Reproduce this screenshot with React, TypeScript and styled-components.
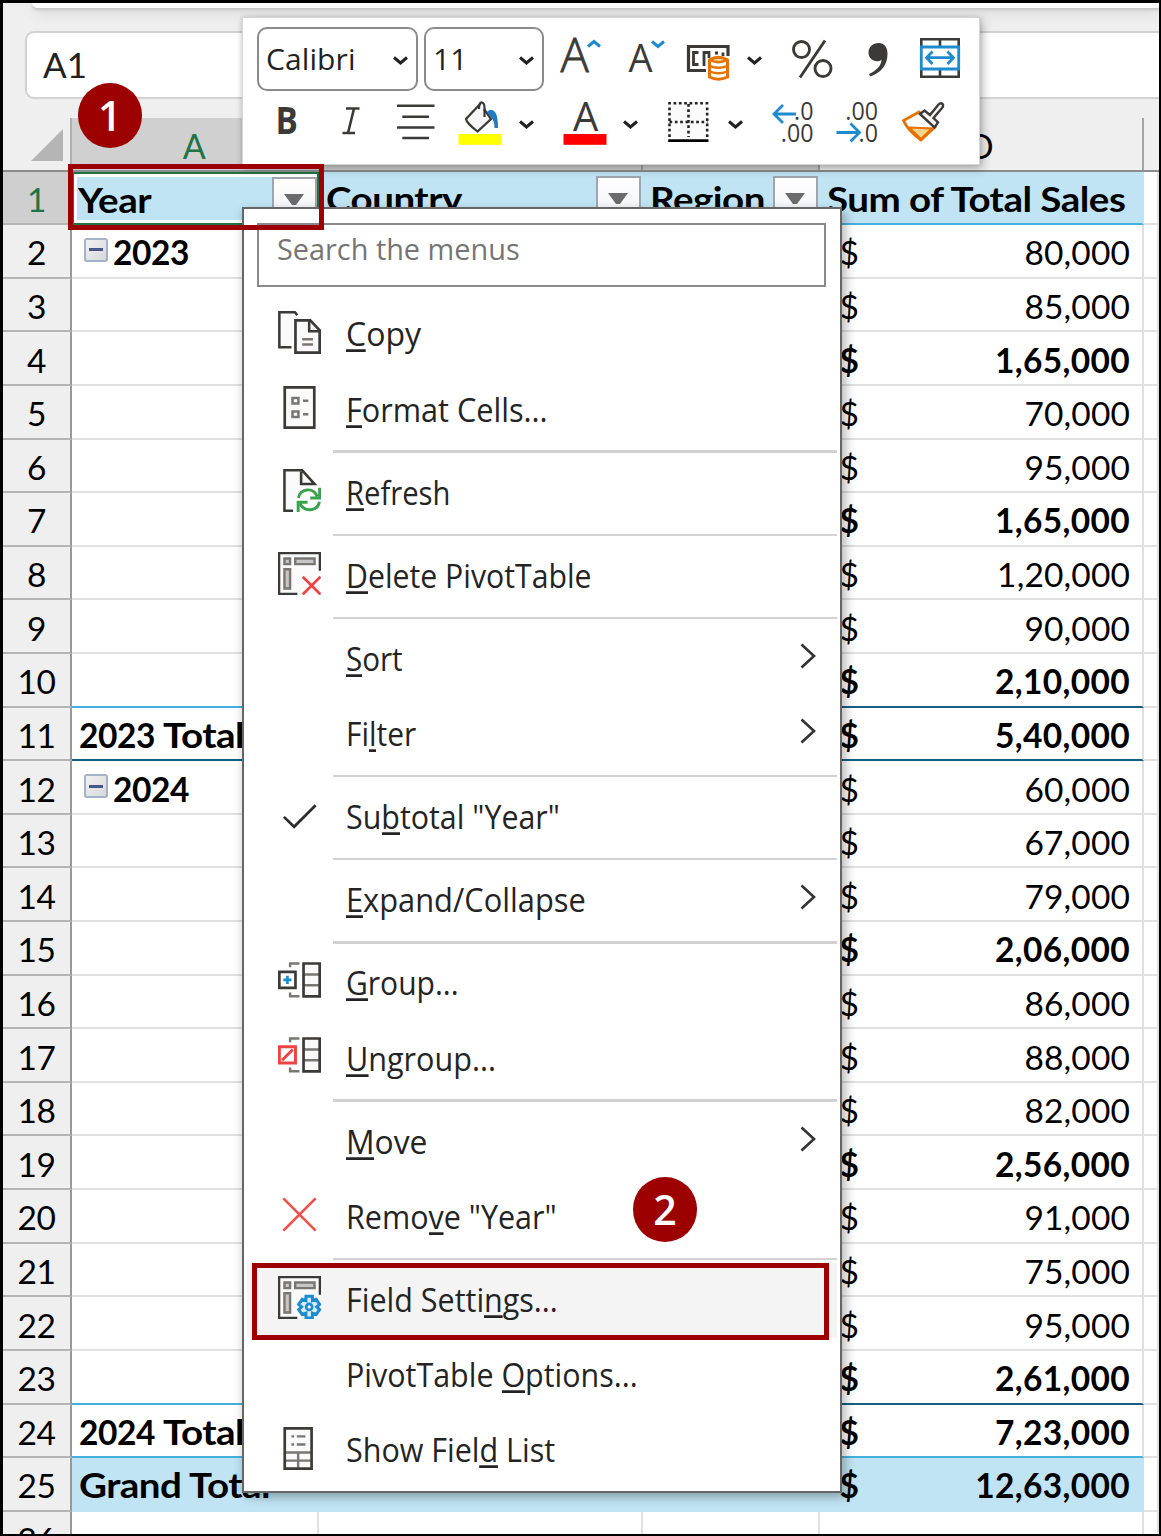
import React from "react";
import styled, { createGlobalStyle, css } from "styled-components";

const GlobalStyle = createGlobalStyle`
  *, *::before, *::after { box-sizing: border-box; }
  body { margin: 0; background: #000; }
`;

const sheetFont = `Lato, "Open Sans", sans-serif`;
const uiFont = `"Open Sans", "Noto Sans", sans-serif`;
const ROW = 53.62;
const red = "#9c0000";

const Window = styled.div`
  position: relative;
  width: 1161px;
  height: 1536px;
  padding: 3px 2px 3px 3px;
  background: #000;
  overflow: hidden;
`;

const Workbook = styled.div`
  display: flex;
  flex-direction: column;
  width: 100%;
  height: 1530.5px;
  overflow: hidden;
  background: #fff;
  font-family: ${sheetFont};
`;

/* ---------- ribbon edge and name box ---------- */

const RibbonEdge = styled.div`
  flex: none;
  height: 28px;
  padding-left: 29px;
  background: #efefef;
`;

const RibbonPanel = styled.div`
  height: 5px;
  background: #fff;
  border-bottom-left-radius: 8px;
  box-shadow: 0 2px 3px #c4c4c4, 0 4px 14px rgba(0, 0, 0, 0.16);
`;

const FormulaBar = styled.div`
  flex: none;
  display: flex;
  height: 68px;
  padding-left: 22px;
  background: #efefef;
`;

const NameBox = styled.div`
  flex: 1;
  display: flex;
  align-items: center;
  padding: 0 0 2px 16px;
  border: 2px solid #d2d2d2;
  border-right: 0;
  border-radius: 9px 0 0 9px;
  background: #fff;
  color: #222;
  font-size: 35px;
`;

/* ---------- grid ---------- */

const gridColumns = css`
  display: grid;
  grid-template-columns: 69px 246.5px 324px 177px 324.6px 1fr;
`;

const ColumnHeads = styled.div`
  ${gridColumns}
  flex: none;
  height: 72.5px;
  padding-top: 19px;
  background: #efefef;
  border-bottom: 2.6px solid #8c8c8c;
`;

const ColumnHead = styled.div<{ $active?: boolean; $shaded?: boolean }>`
  display: flex;
  align-items: center;
  justify-content: center;
  padding-top: 4px;
  border-right: 2px solid ${(p) => (p.$active ? "#cfcfcf" : "#a5a5a5")};
  background: ${(p) => (p.$active || p.$shaded ? "#d0d0d0" : "#efefef")};
  color: ${(p) => (p.$active ? "#217346" : "#000")};
  font-size: 34px;
  &:last-child { border-right: 0; }
`;

const Corner = styled.div`
  display: flex;
  justify-content: flex-end;
  align-items: flex-end;
  padding: 0 7px 9px 0;
  border-right: 2px solid #b0b0b0;
`;

const SheetRow = styled.div`
  ${gridColumns}
  flex: none;
  height: ${ROW}px;
`;

const RowHead = styled.div<{ $active?: boolean }>`
  display: flex;
  align-items: center;
  justify-content: center;
  padding: 3px 0 0 0;
  border-right: 2.4px solid #999;
  border-bottom: 2px solid #b4b4b4;
  background: ${(p) => (p.$active ? "#cfcfcf" : "#efefef")};
  color: ${(p) => (p.$active ? "#217346" : "#000")};
  font-size: 33.5px;
  letter-spacing: -0.4px;
`;

type Line = "grid" | "light" | "dark" | "none";
const lineColor: Record<Line, string> = {
  grid: "#e0e0e0",
  light: "#45b0e0",
  dark: "#156082",
  none: "#c0e4f4",
};

const Cell = styled.div<{ $line: Line; $fill?: boolean; $bold?: boolean; $indent?: boolean }>`
  display: flex;
  align-items: center;
  min-width: 0;
  padding: 3px 0 0 ${(p) => (p.$indent ? 12 : 7)}px;
  border-bottom: 2.4px solid ${(p) => lineColor[p.$line]};
  border-right: 2.4px solid
    ${(p) => (p.$fill ? "#c0e4f4" : p.$line === "none" ? "transparent" : "#e0e0e0")};
  background: ${(p) => (p.$fill ? "#c0e4f4" : "#fff")};
  color: #000;
  font-size: 33.5px;
  font-weight: ${(p) => (p.$bold ? 700 : 400)};
  letter-spacing: -0.45px;
  white-space: pre;
`;

const MoneyCell = styled(Cell)`
  justify-content: space-between;
  padding-left: 20px;
  padding-right: 12px;
  letter-spacing: ${(p) => (p.$bold ? 0.35 : 0.15)}px;
`;

const HeaderCell = styled(Cell)<{ $selected?: boolean }>`
  justify-content: space-between;
  ${(p) =>
    p.$selected &&
    css`
      padding-left: 4px;
      border: 2.4px solid #217346;
      box-shadow: inset 0 0 0 3px #fff;
    `}
`;

const Word = styled.span`
  display: inline-block;
  transform: scaleX(1.15);
  transform-origin: left;
`;

const FilterButton = styled.span`
  flex: none;
  display: flex;
  align-items: center;
  justify-content: center;
  width: 45px;
  height: 46px;
  border: 2.6px solid #a0a6b0;
  background: linear-gradient(#fff, #f0f1f6);
`;

const Collapse = styled.span`
  display: flex;
  align-items: center;
  justify-content: center;
  width: 24px;
  height: 24px;
  margin: -5px 5px 0 0;
  border: 2.6px solid #a5b1ca;
  border-radius: 3px;
  background: linear-gradient(135deg, #f2f2f2, #d8d8d8);
  &::after {
    content: "";
    width: 14px;
    height: 3px;
    background: #47578a;
  }
`;

type RowData = {
  digits?: string;
  label?: string;
  toggle?: boolean;
  amount: string;
  bold?: boolean;
  left?: Line;
  right?: Line;
  fill?: boolean;
};

const rows: RowData[] = [
  { digits: "2023", toggle: true, amount: "80,000" },
  { amount: "85,000" },
  { amount: "1,65,000", bold: true },
  { amount: "70,000" },
  { amount: "95,000" },
  { amount: "1,65,000", bold: true },
  { amount: "1,20,000" },
  { amount: "90,000" },
  { amount: "2,10,000", bold: true, left: "light", right: "dark" },
  { digits: "2023 ", label: "Total", amount: "5,40,000", bold: true, left: "dark", right: "dark" },
  { digits: "2024", toggle: true, amount: "60,000" },
  { amount: "67,000" },
  { amount: "79,000" },
  { amount: "2,06,000", bold: true },
  { amount: "86,000" },
  { amount: "88,000" },
  { amount: "82,000" },
  { amount: "2,56,000", bold: true },
  { amount: "91,000" },
  { amount: "75,000" },
  { amount: "95,000" },
  { amount: "2,61,000", bold: true, left: "light", right: "dark" },
  { digits: "2024 ", label: "Total", amount: "7,23,000", bold: true, left: "light", right: "light" },
  { label: "Grand Total", amount: "12,63,000", bold: true, left: "none", right: "none", fill: true },
];

const FilterArrow = () => (
  <FilterButton>
    <svg width="20" height="12" viewBox="0 0 20 12">
      <path d="M0 0H20L12 11H8Z" fill="#6b6b6b" />
    </svg>
  </FilterButton>
);

/* ---------- mini toolbar ---------- */

const MiniToolbar = styled.div`
  position: absolute;
  left: 242px;
  top: 16.5px;
  width: 738px;
  height: 148.5px;
  padding: 9px 0 0 14px;
  border: 1.8px solid #d6d6d6;
  background: #fff;
  box-shadow: 3px 4px 9px rgba(0, 0, 0, 0.25), 0 0 5px rgba(0, 0, 0, 0.14);
  font-family: ${uiFont};
`;

const ToolRow = styled.div<{ $height: number; $gap?: number }>`
  display: flex;
  height: ${(p) => p.$height}px;
  margin-top: ${(p) => p.$gap || 0}px;
`;

const Combo = styled.div<{ $width: number }>`
  display: flex;
  align-items: center;
  justify-content: space-between;
  width: ${(p) => p.$width}px;
  margin-right: 6px;
  padding: 0 7px 1px 7px;
  border: 2px solid #8a8a8a;
  border-radius: 10px;
  color: #222;
  font-size: 30px;
`;

const ComboChevron = styled.svg`
  margin-top: 6px;
`;

const Tool = styled.svg<{ $left: number }>`
  flex: none;
  margin-left: ${(p) => p.$left}px;
  overflow: visible;
`;

const ink = "#3b3a38";
const blue = "#1e8bcd";
const orange = "#e57200";

const Chevron = () => (
  <ComboChevron width="17" height="10" viewBox="0 0 17 10">
    <path d="M2 1.5L8.5 7L15 1.5" fill="none" stroke="#222" strokeWidth="3" />
  </ComboChevron>
);

const ToolChevron = ({ left, height, y }: { left: number; height: number; y: number }) => (
  <Tool $left={left} width="17" height={height} viewBox={`0 0 17 ${height}`}>
    <path d={`M2 ${y}L8.5 ${y + 5.5}L15 ${y}`} fill="none" stroke="#222" strokeWidth="3" />
  </Tool>
);

const Toolbar = () => (
  <MiniToolbar>
    <ToolRow $height={64}>
      <Combo $width={161}>
        <span style={{ letterSpacing: 0.1 }}>Calibri</span>
        <Chevron />
      </Combo>
      <Combo $width={120}>
        <span>11</span>
        <Chevron />
      </Combo>
      <Tool $left={10} width="42" height="64" viewBox="560 27 42 64">
        <text x="560.5" y="72" fontSize="47" fontWeight="300" fill={ink} stroke={ink} strokeWidth="0.8">A</text>
        <path d="M588 46.5L594 41.5L600 46.5" fill="none" stroke={blue} strokeWidth="3" />
      </Tool>
      <Tool $left={26} width="38" height="64" viewBox="628 27 38 64">
        <text x="628.5" y="72" fontSize="38" fill={ink}>A</text>
        <path d="M652 41.5L658 46.5L664 41.5" fill="none" stroke={blue} strokeWidth="3" />
      </Tool>
      <Tool $left={20} width="46" height="64" viewBox="686 27 46 64">
        <path d="M706 70.5H688.5V46.500H728V56" fill="none" stroke={ink} strokeWidth="3.2" />
        <path d="M698.5 52.5H693.5V64.5H698.5M704 66V52.5H709V58M715 53H718M723 52.5V56" fill="none" stroke={ink} strokeWidth="2.8" />
        <path d="M709.5 60Q718.5 54.500 727.5 60V77Q718.5 81.500 709.5 77Z" fill="#fff" stroke={orange} strokeWidth="3" />
        <path d="M710 60Q718.5 64.500 727 60Q718.5 55 710 60Z" fill="#fbd58a" stroke={orange} strokeWidth="2.4" />
        <path d="M710 66Q718.5 69.500 727 66M710 71.500Q718.5 75 727 71.500" fill="none" stroke={orange} strokeWidth="2.300" />
      </Tool>
      <ToolChevron left={14} height={64} y={30.5} />
      <Tool $left={28} width="42" height="64" viewBox="791 27 42 64">
        <g fill="none" stroke={ink} strokeWidth="2.9">
          <circle cx="801.5" cy="49.5" r="8" />
          <circle cx="823" cy="68.5" r="8" />
          <path d="M825 40.5L800 77.5" />
        </g>
      </Tool>
      <Tool $left={34} width="22" height="64" viewBox="867 27 22 64">
        <path d="M878.5 43C884.5 43 887.5 47.5 887.5 54C887.5 65 881 73 870 76.5L869 74C876.5 70.5 881 66 881.5 60C875 63.5 868.5 59 868.5 52.5C868.5 47 873 43 878.5 43Z" fill={ink} />
      </Tool>
      <Tool $left={31} width="41" height="64" viewBox="920 27 41 64">
        <path d="M921.3 39.3H958.7V76.7H921.3ZM940 39V47M940 69V77" fill="#fff" stroke={ink} strokeWidth="2.6" />
        <path d="M921.3 47H958.7V69H921.3Z" fill="#fff" stroke={blue} strokeWidth="2.8" />
        <path d="M927 57.7H953M932.5 51.5L926.5 57.7L932.5 64M947.5 51.5L953.5 57.7L947.5 64" fill="none" stroke={blue} strokeWidth="2.8" />
      </Tool>
    </ToolRow>
    <ToolRow $height={50} $gap={7}>
      <Tool $left={19} width="24" height="50" viewBox="276 98 24 50">
        <text transform="translate(275.500 134) scale(.9 1)" fontSize="37" fontWeight="700" fill={ink}>B</text>
      </Tool>
      <Tool $left={42} width="18" height="50" viewBox="342 98 18 50">
        <path d="M346 108.500H359.5M342.5 133H355M354 108.500L348 133" fill="none" stroke={ink} strokeWidth="2.6" />
      </Tool>
      <Tool $left={37} width="38" height="50" viewBox="397 98 38 50">
        <path d="M397 105.8H434.5M402.3 116.8H429M397 127.5H434.5M402.3 138H429" stroke={ink} strokeWidth="2.6" />
      </Tool>
      <Tool $left={23} width="44" height="50" viewBox="458 98 44 50">
        <path d="M481 103L466 119Q466.500 123 477.500 131.500L491 119L484 109" fill="#f7f7f7" stroke={ink} strokeWidth="2.2" />
        <path d="M479 109Q479 102 482 102.500Q484.500 103 484.500 108V117" fill="none" stroke={ink} strokeWidth="2.2" />
        <path d="M487 112Q491 107.500 495 112Q498 116 498 128H494.500Q494.500 121 491.500 118Z" fill="#1f7cc0" />
        <rect x="458.500" y="134" width="43" height="10.800" fill="#ffff00" />
      </Tool>
      <ToolChevron left={16} height={50} y={23.5} />
      <Tool $left={27.5} width="44" height="50" viewBox="562.500 98 44 50">
        <text x="572.500" y="131" fontSize="40" fill={ink}>A</text>
        <rect x="563" y="134" width="43" height="10.800" fill="#ff0000" />
      </Tool>
      <ToolChevron left={15.5} height={50} y={23.5} />
      <Tool $left={28.5} width="41" height="50" viewBox="667.500 98 41 50">
        <rect x="668" y="102" width="39" height="36" fill="#fafafa" />
        <path d="M667.700 103.300H708M688 104V137M669 122H707" stroke="#222" strokeWidth="2.600" strokeDasharray="2.700 2.640" />
        <path d="M669 107.500V137M706.700 107.500V137" stroke="#222" strokeWidth="2.600" strokeDasharray="2.700 2.640" />
        <path d="M667.700 140.700H708" stroke="#000" strokeWidth="2.700" />
      </Tool>
      <ToolChevron left={18.5} height={50} y={23.5} />
      <Tool $left={28} width="42" height="50" viewBox="772 98 42 50">
        <path d="M796 114H774M783 105L774 114L783 123" fill="none" stroke={blue} strokeWidth="2.800" />
        <text transform="translate(813.500 120) scale(.93 1)" fontSize="25" textAnchor="end" fill={ink}>
          <tspan x="0" y="0">.0</tspan>
          <tspan x="0" y="22">.00</tspan>
        </text>
      </Tool>
      <Tool $left={22} width="42" height="50" viewBox="836 98 42 50">
        <text transform="translate(878 120) scale(.93 1)" fontSize="25" textAnchor="end" fill={ink}>
          <tspan x="0" y="0">.00</tspan>
          <tspan x="0" y="22">.0</tspan>
        </text>
        <path d="M836.500 132.500H859.500M850.500 123.500L859.500 132.500L850.500 141.500" fill="none" stroke={blue} strokeWidth="2.800" />
      </Tool>
      <Tool $left={23} width="44" height="50" viewBox="901 98 44 50">
        <path d="M919 112L903.500 120.500Q908 131 921 140L935 127Z" fill="#fff" stroke={orange} strokeWidth="2.800" />
        <path d="M909 127.500L932 128.500L921 139Z" fill="#fbd58a" stroke={orange} strokeWidth="2.200" />
        <path d="M920 114L924.500 110.500L930 115L938.500 104.500Q941 102 943 104.500Q943.500 106.500 942 108L933.500 118L938 122.500L934.500 127.500Z" fill="#f7f7f7" stroke={ink} strokeWidth="2.400" />
      </Tool>
    </ToolRow>
  </MiniToolbar>
);

/* ---------- context menu ---------- */

const Menu = styled.div`
  position: absolute;
  left: 242px;
  top: 206.5px;
  width: 600px;
  height: 1286px;
  padding: 14px 3px 0;
  border: 2.4px solid #666;
  background: #fff;
  box-shadow: 5px 5px 9px rgba(0, 0, 0, 0.22), -2px 2px 8px rgba(0, 0, 0, 0.1);
  font-family: ${uiFont};
`;

const Search = styled.div`
  height: 64.5px;
  margin: 0 11px 10.4px 10px;
  padding: 1px 0 0 18px;
  border: 2.5px solid #8a8a8a;
  color: #757575;
  font-size: 30px;
  line-height: 46px;
  white-space: nowrap;
`;

const Squeezed = styled.span<{ $by: number }>`
  display: inline-block;
  transform: scaleX(${(p) => p.$by});
  transform-origin: left;
`;

const Item = styled.div<{ $active?: boolean }>`
  display: flex;
  align-items: center;
  height: 75.1px;
  padding: 0 19px 0 31.2px;
  background: ${(p) => (p.$active ? "#f4f4f4" : "transparent")};
`;

const IconSlot = styled.span`
  flex: none;
  display: flex;
  width: 43px;
  height: 43px;
  margin: -5px 24.8px 0 0;
`;

const Label = styled.span<{ $by: number }>`
  flex: none;
  margin-top: -1px;
  color: #242424;
  font-size: 32.5px;
  line-height: 44px;
  white-space: nowrap;
  transform: scaleX(${(p) => p.$by});
  transform-origin: left;
`;

const Key = styled.span`
  box-shadow: inset 0 -2.7px 0 #242424;
  display: inline-block;
  height: 40px;
  line-height: 44px;
`;

const Separator = styled.div`
  height: 8.05px;
  padding: 2.8px 0 0 85.5px;
  &::before {
    content: "";
    display: block;
    height: 2.4px;
    background: #d2d2d2;
  }
`;

const Submenu = styled.span`
  display: flex;
  margin: -7px 0 0 auto;
`;

const gray = "#797774";

const PivotFrame = () => (
  <>
    <path d="M.4.400H15.600V15.600H.4Z" fill="#fafafa" />
    <path d="M7.200 15.600H.4V.4H15.600V7" fill="none" stroke={ink} strokeWidth=".9" />
    <path d="M2.400 2.400H4.500V4.500H2.400ZM6.400 2.400H13.600V4.500H6.400ZM2.400 6.400H4.500V13.600H2.400Z" fill="#c8c6c4" stroke={gray} strokeWidth=".9" />
  </>
);

const ColumnStack = () => (
  <>
    <path d="M4.500 1.800V.4H8M4.500 11.200V12.600H8" fill="none" stroke={gray} strokeWidth=".9" />
    <path d="M9.400.400H15.500V12.600H9.400Z" fill="#fafafa" />
    <path d="M9.400 4.500H15.500M9.400 8.500H15.500" stroke={gray} strokeWidth=".9" />
    <path d="M9.500.400H15.500V12.600H9.500Z" fill="none" stroke={ink} strokeWidth="1" />
  </>
);

const icons: Record<string, React.ReactNode> = {
  copy: (
    <>
      <path d="M5 13.500H.5V.5H6.300L7.200 1.600" fill="#fafafa" stroke={ink} strokeWidth=".95" />
      <path d="M6.500 3.500H12L15.500 7.200V15.500H6.500Z" fill="#fafafa" stroke={ink} strokeWidth="1" />
      <path d="M11.600 3.700V7.500H15.500" fill="none" stroke={ink} strokeWidth=".95" />
      <path d="M9 10.500H13M9 12.500H13" stroke={gray} strokeWidth=".95" />
    </>
  ),
  format: (
    <>
      <path d="M2.500.5H13.500V15.500H2.500Z" fill="#fafafa" stroke={ink} strokeWidth="1" />
      <path d="M5.400 4.500H7.600V6.500H5.400ZM5.400 9.500H7.600V11.500H5.400ZM9.300 5.500H11.300M9.300 10.500H11.300" fill="none" stroke={gray} strokeWidth=".95" />
    </>
  ),
  refresh: (
    <>
      <path d="M5.600 15.500H2.400V.5H9L13.600 5.600V7H7V12Z" fill="#fafafa" />
      <path d="M5.600 15.500H2.400V.5H9L13.600 5.600H8.600V1" fill="none" stroke={ink} strokeWidth=".95" />
      <g fill="none" stroke="#3aa24f" strokeWidth="1.100">
        <path d="M7.600 10.800C8.100 7.300 13 6.500 14.600 10.200M15.500 7V10.800H12" />
        <path d="M15.400 12.200C14.800 15.800 10 16.200 8.200 12.900M7.500 16V12.400H11" />
      </g>
    </>
  ),
  remove: (
    <>
      <PivotFrame />
      <path d="M9.200 9.200L15.800 15.800M15.800 9.200L9.200 15.800" stroke="#ee4340" strokeWidth="1" />
    </>
  ),
  check: <path d="M2.200 7.900L6 11.600L14 3.600" transform="translate(0 .6)" fill="none" stroke="#2b2b2b" strokeWidth="1" />,
  group: (
    <g transform="translate(0 .900)">
      <ColumnStack />
      <path d="M.5 3.500H6.500V9.500H.5Z" fill="#fff" stroke={ink} strokeWidth="1" />
      <path d="M2 6.500H5M3.500 5V8" stroke={blue} strokeWidth="1" />
    </g>
  ),
  ungroup: (
    <g transform="translate(0 .900)">
      <ColumnStack />
      <path d="M.5 3.500H6.500V9.500H.5ZM1.500 8.500L5.500 4.500" fill="#fff" stroke="#ee4340" strokeWidth="1.100" />
    </g>
  ),
  cross: <path d="M2 2L14 14M14 2L2 14" stroke="#f0504c" strokeWidth="1" />,
  field: (
    <>
      <PivotFrame />
      <circle cx="11.600" cy="11.500" r="4.700" fill="#f4f4f4" />
      <path d="M10.400 7.500H12.800V9.200L14.200 8.700L15.500 10.600L14.400 11.500L15.500 12.500L14.200 14.300L12.800 13.800V15.600H10.400V13.800L9 14.300L7.700 12.500L8.800 11.500L7.700 10.600L9 8.700L10.400 9.200Z" fill="#d9ecf8" stroke={blue} strokeWidth="1.100" />
      <circle cx="11.600" cy="11.500" r="1.100" fill="#fff" stroke={blue} strokeWidth="1" />
    </>
  ),
  list: (
    <>
      <path d="M2.500.5H12.500V15.500H2.500Z" fill="#fafafa" />
      <path d="M2.500 9.500H12.500M2.500 12.500H12.500M7.500 9.500V15.500M5 3.500H6M7 3.500H10.200M5 6.500H6M7 6.500H10.200" stroke={gray} strokeWidth=".9" />
      <path d="M2.500.5H12.500V15.500H2.500Z" fill="none" stroke={ink} strokeWidth="1" />
    </>
  ),
};

type MenuEntry = {
  before?: string;
  key: string;
  after: string;
  icon?: string;
  sub?: boolean;
  active?: boolean;
  line?: boolean;
  by: number;
};

const entries: MenuEntry[] = [
  { key: "C", after: "opy", icon: "copy", by: 0.985 },
  { key: "F", after: "ormat Cells...", icon: "format", line: true, by: 0.942 },
  { key: "R", after: "efresh", icon: "refresh", line: true, by: 0.898 },
  { key: "D", after: "elete PivotTable", icon: "remove", line: true, by: 0.93 },
  { key: "S", after: "ort", sub: true, by: 0.91 },
  { before: "Fi", key: "l", after: "ter", sub: true, line: true, by: 0.92 },
  { before: "Su", key: "b", after: 'total "Year"', icon: "check", line: true, by: 0.935 },
  { key: "E", after: "xpand/Collapse", sub: true, line: true, by: 0.948 },
  { key: "G", after: "roup...", icon: "group", by: 0.924 },
  { key: "U", after: "ngroup...", icon: "ungroup", line: true, by: 0.94 },
  { key: "M", after: "ove", sub: true, by: 0.978 },
  { before: "Remo", key: "v", after: 'e "Year"', icon: "cross", line: true, by: 0.938 },
  { before: "Field Setti", key: "n", after: "gs...", icon: "field", active: true, by: 0.938 },
  { before: "PivotTable ", key: "O", after: "ptions...", by: 0.937 },
  { before: "Show Fiel", key: "d", after: " List", icon: "list", by: 0.938 },
];

const ContextMenu = () => (
  <Menu>
    <Search>
      <Squeezed $by={0.962}>Search the menus</Squeezed>
    </Search>
    {entries.map((e, i) => (
      <React.Fragment key={i}>
        <Item $active={e.active}>
          <IconSlot>
            {e.icon && (
              <svg width="43" height="43" viewBox="0 0 16 16">
                {icons[e.icon]}
              </svg>
            )}
          </IconSlot>
          <Label $by={e.by}>
            {e.before}
            <Key>{e.key}</Key>
            {e.after}
          </Label>
          {e.sub && (
            <Submenu>
              <svg width="20" height="26" viewBox="0 0 20 26">
                <path d="M3.500 1.500L16 13L3.500 24.500" fill="none" stroke="#333" strokeWidth="2.600" />
              </svg>
            </Submenu>
          )}
        </Item>
        {e.line && <Separator />}
      </React.Fragment>
    ))}
  </Menu>
);

/* ---------- annotations ---------- */

const Highlight = styled.div<{ $x: number; $y: number; $w: number; $h: number }>`
  position: absolute;
  left: ${(p) => p.$x}px;
  top: ${(p) => p.$y}px;
  width: ${(p) => p.$w}px;
  height: ${(p) => p.$h}px;
  border: 5px solid ${red};
`;

const Badge = styled.div<{ $x: number; $y: number }>`
  position: absolute;
  left: ${(p) => p.$x}px;
  top: ${(p) => p.$y}px;
  display: flex;
  align-items: center;
  justify-content: center;
  width: 64.5px;
  height: 64.5px;
  border-radius: 50%;
  background: ${red};
  color: #fff;
  font: 600 41px/1 ${uiFont};
`;

export default function App() {
  return (
    <Window>
      <GlobalStyle />
      <Workbook>
        <RibbonEdge>
          <RibbonPanel />
        </RibbonEdge>
        <FormulaBar>
          <NameBox>A1</NameBox>
        </FormulaBar>
        <ColumnHeads>
          <Corner>
            <svg width="32" height="32" viewBox="0 0 32 32">
              <path d="M32 0V32H0Z" fill="#b5b5b5" />
            </svg>
          </Corner>
          <ColumnHead $active>A</ColumnHead>
          <ColumnHead $shaded>B</ColumnHead>
          <ColumnHead $shaded>C</ColumnHead>
          <ColumnHead>D</ColumnHead>
          <ColumnHead />
        </ColumnHeads>
        <SheetRow>
          <RowHead $active>1</RowHead>
          <HeaderCell $line="light" $fill $bold $selected>
            <Word>Year</Word>
            <FilterArrow />
          </HeaderCell>
          <HeaderCell $line="light" $fill $bold>
            <Word>Country</Word>
            <FilterArrow />
          </HeaderCell>
          <HeaderCell $line="light" $fill $bold>
            <Word>Region</Word>
            <FilterArrow />
          </HeaderCell>
          <HeaderCell $line="light" $fill $bold>
            <Word>Sum of Total Sales</Word>
          </HeaderCell>
          <Cell $line="grid" />
        </SheetRow>
        {rows.map((r, i) => (
          <SheetRow key={i}>
            <RowHead>{i + 2}</RowHead>
            <Cell $line={r.left || "grid"} $fill={r.fill} $bold $indent={r.toggle}>
              {r.toggle && <Collapse />}
              {r.digits}
              {r.label && <Word>{r.label}</Word>}
            </Cell>
            <Cell $line={r.left || "grid"} $fill={r.fill} />
            <Cell $line={r.left || "grid"} $fill={r.fill} />
            <MoneyCell $line={r.right || "grid"} $fill={r.fill} $bold={r.bold}>
              <span>$</span>
              <span>{r.amount}</span>
            </MoneyCell>
            <Cell $line="grid" />
          </SheetRow>
        ))}
        <SheetRow>
          <RowHead>26</RowHead>
          <Cell $line="grid" />
          <Cell $line="grid" />
          <Cell $line="grid" />
          <Cell $line="grid" />
          <Cell $line="grid" />
        </SheetRow>
      </Workbook>
      <Toolbar />
      <ContextMenu />
      <Highlight $x={67.5} $y={164} $w={256.5} $h={66} />
      <Highlight $x={252} $y={1262.5} $w={576.5} $h={77.5} />
      <Badge $x={77.5} $y={83}>1</Badge>
      <Badge $x={632.7} $y={1177}>2</Badge>
    </Window>
  );
}
